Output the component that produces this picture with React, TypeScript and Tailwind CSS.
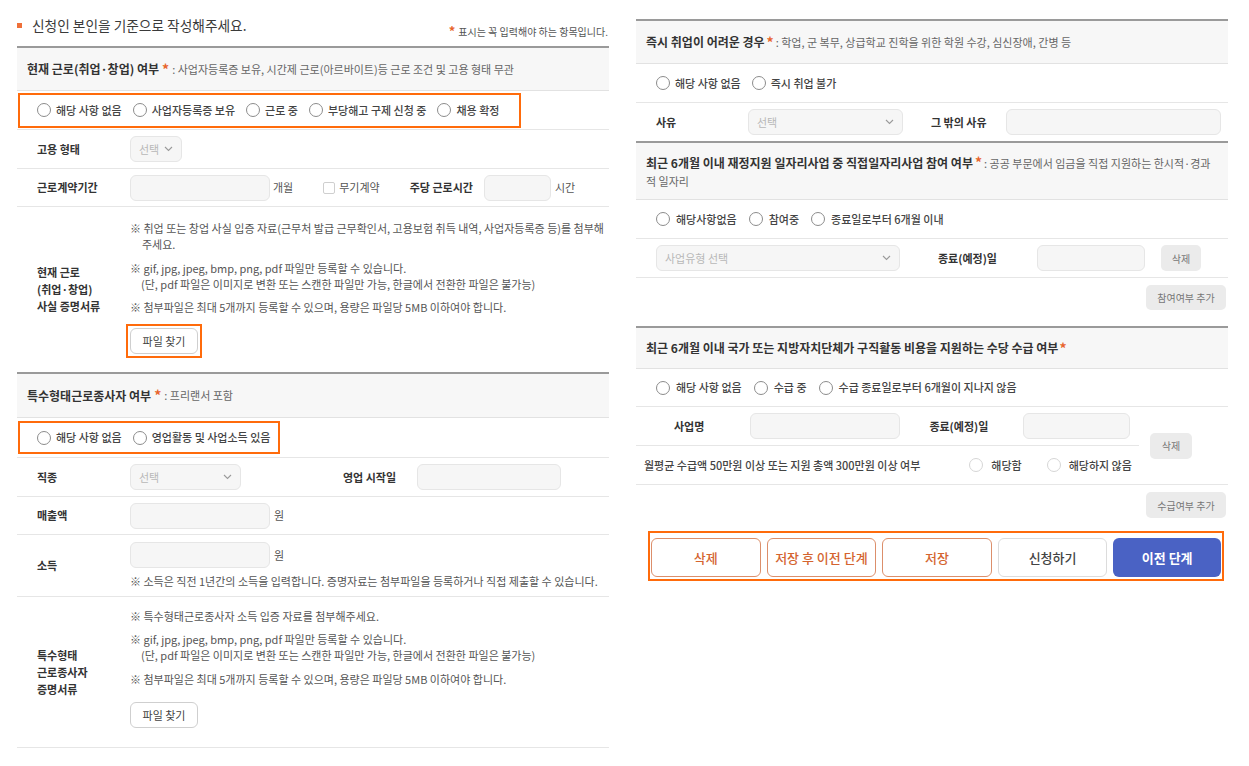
import React from 'react';

const Radio = ({ label, light = false, gap = 'gap-[5px]' }: { label: string; light?: boolean; gap?: string }) => (
  <span className={`flex items-center ${gap}`}>
    <span
      className={`w-[14px] h-[14px] rounded-full border bg-white shrink-0 ${
        light ? 'border-[#d6d6d6]' : 'border-[#8c8c8c]'
      }`}
    />
    <span className="whitespace-nowrap">{label}</span>
  </span>
);

const Chevron = () => (
  <svg width="9" height="6" viewBox="0 0 9 6" fill="none">
    <path d="M1 1l3.5 3.5L8 1" stroke="#9a9a9a" strokeWidth="1.1" />
  </svg>
);

const Select = ({ className, label = '선택' }: { className: string; label?: string }) => (
  <div
    className={`h-[26px] rounded-[6px] border border-[#e6e6e6] bg-[#f6f6f6] flex items-center justify-between px-[8px] text-[11px] text-[#b8b8b8] ${className}`}
  >
    <span className="whitespace-nowrap">{label}</span>
    <Chevron />
  </div>
);

const Input = ({ className }: { className: string }) => (
  <div className={`h-[26px] rounded-[6px] border border-[#e6e6e6] bg-[#f6f6f6] ${className}`} />
);

const Label = ({ children, className = '' }: { children: React.ReactNode; className?: string }) => (
  <div className={`text-[11px] font-bold text-[#333] whitespace-nowrap ${className}`}>{children}</div>
);

const Star = () => <span className="text-[#e8642c] text-[14px] font-bold mx-[3px]">*</span>;

const GrayButton = ({ children, className }: { children: React.ReactNode; className: string }) => (
  <button className={`rounded-[5px] bg-[#ebebeb] text-[10px] text-[#777] whitespace-nowrap flex items-center justify-center ${className}`}>
    {children}
  </button>
);

const FileButton = () => (
  <button className="w-[68px] h-[26px] rounded-[6px] border border-[#cfcfcf] bg-white text-[11px] text-[#444] flex items-center justify-center">
    파일 찾기
  </button>
);

const line = 'border-b border-[#e6e6e6]';
const header = 'border-t-2 border-[#9a9a9a] bg-[#f7f7f7] border-b border-b-[#e2e2e2] flex items-center pl-[10px]';

export default function App() {
  return (
    <div className="w-[1249px] h-[766px] bg-white flex font-['Noto_Sans_CJK_KR','Noto_Sans',sans-serif] text-[#333]">
      {/* left column */}
      <div className="ml-[17px] w-[592px]">
        <div className="h-[46px] flex justify-between">
          <div className="mt-[16px] h-[18px] flex items-center">
            <span className="w-[5px] h-[5px] bg-[#ef7039] mr-[10px]" />
            <span className="text-[13.7px] text-[#3a3a3a]">신청인 본인을 기준으로 작성해주세요.</span>
          </div>
          <div className="mt-[24px] h-[14px] flex items-center text-[10px] text-[#555] pr-[1px]">
            <span className="text-[#e8642c] text-[13px] font-bold mr-[3px]">*</span>표시는 꼭 입력해야 하는 항목입니다.
          </div>
        </div>

        <div className={`h-[45px] ${header}`}>
          <span className="text-[12px] font-bold">현재 근로(취업·창업) 여부</span>
          <Star />
          <span className="text-[11px] text-[#666]">: 사업자등록증 보유, 시간제 근로(아르바이트)등 근로 조건 및 고용 형태 무관</span>
        </div>

        <div className={`h-[39px] ${line} flex items-center`}>
          <div className="ml-[1px] h-[35px] w-[503px] border-2 border-[#ff6b0b] flex items-center pl-[17px] gap-[11px] text-[11px] font-medium text-[#444]">
            <Radio label="해당 사항 없음" />
            <Radio label="사업자등록증 보유" />
            <Radio label="근로 중" />
            <Radio label="부당해고 구제 신청 중" />
            <Radio label="채용 확정" />
          </div>
        </div>

        <div className={`h-[39px] ${line} grid grid-cols-[113px_1fr] items-center`}>
          <Label className="pl-[20px]">고용 형태</Label>
          <Select className="w-[52px]" />
        </div>

        <div className={`h-[38px] ${line} grid grid-cols-[113px_1fr] items-center`}>
          <Label className="pl-[20px]">근로계약기간</Label>
          <div className="flex items-center text-[11px] text-[#555]">
            <Input className="w-[140px]" />
            <span className="ml-[3px]">개월</span>
            <span className="ml-[30px] w-[12px] h-[12px] border border-[#cfcfcf] bg-white rounded-[2px]" />
            <span className="ml-[4px]">무기계약</span>
            <Label className="ml-[30px]">주당 근로시간</Label>
            <Input className="ml-[11px] w-[67px]" />
            <span className="ml-[4px]">시간</span>
          </div>
        </div>

        <div className="grid grid-cols-[113px_1fr]">
          <div className="pl-[20px] flex items-center">
            <Label className="leading-[17px]">
              현재 근로
              <br />
              (취업·창업)
              <br />
              사실 증명서류
            </Label>
          </div>
          <div className="pt-[13px] pb-[14px] text-[11px] leading-[16px] text-[#555] whitespace-nowrap">
            <p>※ 취업 또는 창업 사실 입증 자료(근무처 발급 근무확인서, 고용보험 취득 내역, 사업자등록증 등)를 첨부해</p>
            <p className="pl-[12px]">주세요.</p>
            <p className="mt-[8px]">※ gif, jpg, jpeg, bmp, png, pdf 파일만 등록할 수 있습니다.</p>
            <p className="pl-[11px]">(단, pdf 파일은 이미지로 변환 또는 스캔한 파일만 가능, 한글에서 전환한 파일은 불가능)</p>
            <p className="mt-[7px]">※ 첨부파일은 최대 5개까지 등록할 수 있으며, 용량은 파일당 5MB 이하여야 합니다.</p>
            <div className="mt-[9px] -ml-[4px] inline-flex border-2 border-[#ff6b0b] p-[2px]">
              <FileButton />
            </div>
          </div>
        </div>

        <div className={`h-[46px] ${header}`}>
          <span className="text-[12px] font-bold">특수형태근로종사자 여부</span>
          <Star />
          <span className="text-[11px] text-[#666]">: 프리랜서 포함</span>
        </div>

        <div className={`h-[40px] ${line} flex items-center`}>
          <div className="ml-[1px] h-[33px] w-[262px] border-2 border-[#ff6b0b] flex items-center pl-[17px] gap-[11px] text-[11px] font-medium text-[#444]">
            <Radio label="해당 사항 없음" />
            <Radio label="영업활동 및 사업소득 있음" />
          </div>
        </div>

        <div className={`h-[39px] ${line} grid grid-cols-[113px_1fr] items-center`}>
          <Label className="pl-[20px]">직종</Label>
          <div className="flex items-center">
            <Select className="w-[111px]" />
            <Label className="ml-[102px]">영업 시작일</Label>
            <Input className="ml-[21px] w-[144px]" />
          </div>
        </div>

        <div className={`h-[38px] ${line} grid grid-cols-[113px_1fr] items-center`}>
          <Label className="pl-[20px]">매출액</Label>
          <div className="flex items-center text-[11px] text-[#555]">
            <Input className="w-[140px]" />
            <span className="ml-[4px]">원</span>
          </div>
        </div>

        <div className={`${line} grid grid-cols-[113px_1fr]`}>
          <div className="pl-[20px] flex items-center">
            <Label>소득</Label>
          </div>
          <div className="pt-[7px] pb-[7px] text-[11px] text-[#555]">
            <div className="flex items-center">
              <Input className="w-[140px] h-[25px]" />
              <span className="ml-[4px]">원</span>
            </div>
            <p className="mt-[5px] leading-[16px] whitespace-nowrap">
              ※ 소득은 직전 1년간의 소득을 입력합니다. 증명자료는 첨부파일을 등록하거나 직접 제출할 수 있습니다.
            </p>
          </div>
        </div>

        <div className={`${line} grid grid-cols-[113px_1fr]`}>
          <div className="pl-[20px] flex items-center">
            <Label className="leading-[17px]">
              특수형태
              <br />
              근로종사자
              <br />
              증명서류
            </Label>
          </div>
          <div className="pt-[11px] pb-[19px] text-[11px] leading-[16px] text-[#555] whitespace-nowrap">
            <p>※ 특수형태근로종사자 소득 입증 자료를 첨부해주세요.</p>
            <p className="mt-[7px]">※ gif, jpg, jpeg, bmp, png, pdf 파일만 등록할 수 있습니다.</p>
            <p className="pl-[11px]">(단, pdf 파일은 이미지로 변환 또는 스캔한 파일만 가능, 한글에서 전환한 파일은 불가능)</p>
            <p className="mt-[8px]">※ 첨부파일은 최대 5개까지 등록할 수 있으며, 용량은 파일당 5MB 이하여야 합니다.</p>
            <div className="mt-[15px]">
              <FileButton />
            </div>
          </div>
        </div>
      </div>

      {/* right column */}
      <div className="ml-[27px] w-[592px] mt-[19px]">
        <div className={`h-[45px] ${header}`}>
          <span className="text-[12px] font-bold">즉시 취업이 어려운 경우</span>
          <span className="text-[#e8642c] text-[14px] font-bold mx-[2px]">*</span>
          <span className="text-[11px] text-[#666]">: 학업, 군 복무, 상급학교 진학을 위한 학원 수강, 심신장애, 간병 등</span>
        </div>

        <div className={`h-[39px] ${line} flex items-center pl-[20px] gap-[11px] text-[11px] font-medium text-[#444]`}>
          <Radio label="해당 사항 없음" />
          <Radio label="즉시 취업 불가" />
        </div>

        <div className="h-[38px] grid grid-cols-[112px_1fr] items-center">
          <Label className="pl-[20px]">사유</Label>
          <div className="flex items-center">
            <Select className="w-[155px]" />
            <Label className="ml-[28px]">그 밖의 사유</Label>
            <Input className="ml-[19px] w-[215px]" />
          </div>
        </div>

        <div className={`h-[59px] ${header}`}>
          <div className="leading-[16px] whitespace-nowrap">
            <span className="text-[12px] font-bold">최근 6개월 이내 재정지원 일자리사업 중 직접일자리사업 참여 여부</span>
            <span className="text-[#e8642c] text-[14px] font-bold mx-[2px]">*</span>
            <span className="text-[11px] text-[#666]">: 공공 부문에서 임금을 직접 지원하는 한시적·경과</span>
            <br />
            <span className="text-[11px] text-[#666]">적 일자리</span>
          </div>
        </div>

        <div className={`h-[39px] ${line} flex items-center pl-[20px] gap-[12px] text-[11px] font-medium text-[#444]`}>
          <Radio label="해당사항없음" gap="gap-[6px]" />
          <Radio label="참여중" gap="gap-[6px]" />
          <Radio label="종료일로부터 6개월 이내" gap="gap-[6px]" />
        </div>

        <div className={`h-[39px] ${line} flex items-center`}>
          <Select className="ml-[20px] w-[244px]" label="사업유형 선택" />
          <Label className="ml-[38px]">종료(예정)일</Label>
          <Input className="ml-[40px] w-[108px]" />
          <GrayButton className="ml-[16px] w-[40px] h-[26px]">삭제</GrayButton>
        </div>

        <div className="h-[48px] flex justify-end items-start pt-[7px] pr-[2px]">
          <GrayButton className="w-[80px] h-[25px]">참여여부 추가</GrayButton>
        </div>

        <div className={`h-[43px] ${header}`}>
          <span className="text-[12px] font-bold">최근 6개월 이내 국가 또는 지방자치단체가 구직활동 비용을 지원하는 수당 수급 여부</span>
          <span className="text-[#e8642c] text-[14px] font-bold ml-[1px]">*</span>
        </div>

        <div className={`h-[38px] ${line} flex items-center pl-[20px] gap-[12px] text-[11px] font-medium text-[#444]`}>
          <Radio label="해당 사항 없음" gap="gap-[6px]" />
          <Radio label="수급 중" gap="gap-[6px]" />
          <Radio label="수급 종료일로부터 6개월이 지나지 않음" gap="gap-[6px]" />
        </div>

        <div className={`flex ${line}`}>
          <div className="w-[503px]">
            <div className={`h-[39px] ${line} flex items-center`}>
              <Label className="ml-[38px]">사업명</Label>
              <Input className="ml-[46px] w-[150px]" />
              <Label className="ml-[29px]">종료(예정)일</Label>
              <Input className="ml-[35px] w-[107px]" />
            </div>
            <div className="h-[38px] flex items-center text-[11px] font-medium text-[#444]">
              <span className="ml-[8px] whitespace-nowrap">월평균 수급액 50만원 이상 또는 지원 총액 300만원 이상 여부</span>
              <span className="ml-[49px]">
                <Radio label="해당함" light gap="gap-[8px]" />
              </span>
              <span className="ml-[25px]">
                <Radio label="해당하지 않음" light gap="gap-[8px]" />
              </span>
            </div>
          </div>
          <div className="flex-1 flex items-center">
            <GrayButton className="ml-[11px] w-[42px] h-[26px]">삭제</GrayButton>
          </div>
        </div>

        <div className="flex justify-end pt-[7px] pr-[2px]">
          <GrayButton className="w-[80px] h-[26px]">수급여부 추가</GrayButton>
        </div>

        <div className="mt-[13px] ml-[12px] w-[576px] h-[50px] border-2 border-[#ff6b0b] flex gap-[6px] px-[1px] pt-[5px] pb-[2px]">
          <button className="flex-1 h-[39px] rounded-[6px] border border-[#dc8f6b] bg-white text-[13px] font-medium text-[#d4642f]">
            삭제
          </button>
          <button className="flex-1 h-[39px] rounded-[6px] border border-[#dc8f6b] bg-white text-[13px] font-medium text-[#d4642f] whitespace-nowrap">
            저장 후 이전 단계
          </button>
          <button className="flex-1 h-[39px] rounded-[6px] border border-[#dc8f6b] bg-white text-[13px] font-medium text-[#d4642f]">
            저장
          </button>
          <button className="flex-1 h-[39px] rounded-[6px] border border-[#dcdcdc] bg-white text-[13px] font-medium text-[#444]">
            신청하기
          </button>
          <button className="flex-1 h-[39px] rounded-[6px] bg-[#4a62c4] text-[13px] font-bold text-white">
            이전 단계
          </button>
        </div>
      </div>
    </div>
  );
}
